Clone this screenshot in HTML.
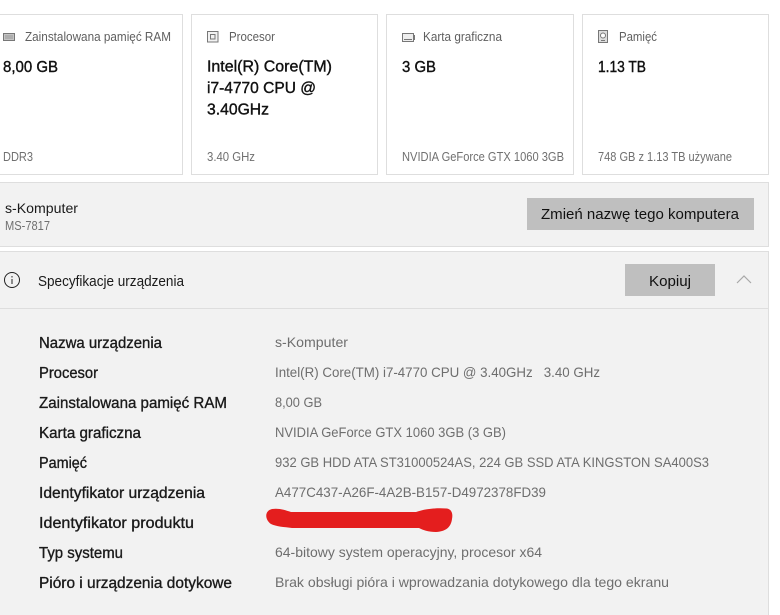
<!DOCTYPE html>
<html lang="pl"><head><meta charset="utf-8"><title>Specyfikacje urządzenia</title>
<style>
html,body{margin:0;padding:0;background:#fff;width:780px;height:615px;overflow:hidden}
svg{display:block;font-family:"Liberation Sans",sans-serif}
.l{font-size:12.5px;fill:#5f5f5f}
.v{font-size:16px;fill:#111;stroke:#111;stroke-width:.4px}
.s{font-size:12.5px;fill:#707070}
.k{font-size:15.5px;fill:#1a1a1a;stroke:#1a1a1a;stroke-width:.35px}
.d{font-size:14px;fill:#6e6e6e}
.t{font-size:14.5px;fill:#1a1a1a}
.i{fill:none;stroke:#777;stroke-width:1}
</style></head><body>
<svg width="780" height="615" viewBox="0 0 780 615" xmlns="http://www.w3.org/2000/svg">
<rect width="780" height="615" fill="#fff"/>
<!-- cards -->
<g fill="#fff" stroke="#dedede">
<rect x="-3" y="14.500" width="185.500" height="160"/>
<rect x="191.500" y="14.500" width="186" height="160"/>
<rect x="386.500" y="14.500" width="187" height="160"/>
<rect x="582.500" y="14.500" width="186" height="160"/>
</g>
<!-- card icons -->
<g class="i">
<rect x="3.500" y="33.500" width="11" height="7" fill="#c4c4c4"/>
<path d="M5 36h8M5 38h8" stroke="#999"/>
<rect x="207.500" y="31.500" width="10.500" height="10.500" fill="#f2f2f2"/>
<rect x="210.500" y="34.500" width="4.500" height="4.500"/>
<rect x="402.500" y="33.500" width="11" height="8" fill="#eee"/>
<path d="M404 39.500h8M414.500 35v5"/>
<rect x="598.500" y="30.500" width="9" height="12" fill="#ddd"/>
<circle cx="603" cy="35.500" r="2.500" fill="#fff"/>
<path d="M601 40.500h4"/>
</g>
<!-- card text -->
<text class="l" x="25" y="41" textLength="146" lengthAdjust="spacingAndGlyphs">Zainstalowana pamięć RAM</text>
<text class="l" x="229" y="41" textLength="46" lengthAdjust="spacingAndGlyphs">Procesor</text>
<text class="l" x="423" y="41" textLength="79" lengthAdjust="spacingAndGlyphs">Karta graficzna</text>
<text class="l" x="619" y="41" textLength="38" lengthAdjust="spacingAndGlyphs">Pamięć</text>
<text class="v" x="3" y="72" textLength="55" lengthAdjust="spacingAndGlyphs">8,00 GB</text>
<text class="v" x="207" y="71.500" textLength="125" lengthAdjust="spacingAndGlyphs">Intel(R) Core(TM)</text>
<text class="v" x="207" y="93" textLength="109" lengthAdjust="spacingAndGlyphs">i7-4770 CPU @</text>
<text class="v" x="207" y="114.500" textLength="62" lengthAdjust="spacingAndGlyphs">3.40GHz</text>
<text class="v" x="402" y="72" textLength="34" lengthAdjust="spacingAndGlyphs">3 GB</text>
<text class="v" x="598" y="72" textLength="48" lengthAdjust="spacingAndGlyphs">1.13 TB</text>
<text class="s" x="3" y="161" textLength="30" lengthAdjust="spacingAndGlyphs">DDR3</text>
<text class="s" x="207" y="161" textLength="48" lengthAdjust="spacingAndGlyphs">3.40 GHz</text>
<text class="s" x="402" y="161" textLength="162" lengthAdjust="spacingAndGlyphs">NVIDIA GeForce GTX 1060 3GB</text>
<text class="s" x="598" y="161" textLength="134" lengthAdjust="spacingAndGlyphs">748 GB z 1.13 TB używane</text>
<!-- computer panel -->
<rect x="-2" y="182.500" width="770.500" height="64" fill="#f2f2f2" stroke="#dedede"/>
<text x="5" y="213" font-size="14" fill="#1a1a1a" textLength="73" lengthAdjust="spacingAndGlyphs">s-Komputer</text>
<text class="s" x="5" y="230" textLength="45" lengthAdjust="spacingAndGlyphs">MS-7817</text>
<rect x="527" y="198" width="227" height="32" fill="#bfbfbf"/>
<text x="541" y="219" font-size="15" fill="#111" textLength="198" lengthAdjust="spacingAndGlyphs">Zmień nazwę tego komputera</text>
<!-- spec panel -->
<rect x="-2" y="251.500" width="770.500" height="370" fill="#f2f2f2" stroke="#dedede"/>
<path d="M0 308.500H768" stroke="#dedede"/>
<circle cx="12" cy="280" r="7.500" fill="none" stroke="#222"/>
<path d="M12 279v5M12 276v1.500" stroke="#222" fill="none"/>
<text class="t" x="38" y="286" textLength="146" lengthAdjust="spacingAndGlyphs">Specyfikacje urządzenia</text>
<rect x="625" y="264" width="90" height="32" fill="#bfbfbf"/>
<text x="649" y="286" font-size="15" fill="#111" textLength="42" lengthAdjust="spacingAndGlyphs">Kopiuj</text>
<path d="M737 283l7-7 7 7" fill="none" stroke="#a8a8a8" stroke-width="1.200"/>
<!-- rows -->
<text class="k" x="39" y="348" textLength="123" lengthAdjust="spacingAndGlyphs">Nazwa urządzenia</text>
<text class="k" x="39" y="378" textLength="59" lengthAdjust="spacingAndGlyphs">Procesor</text>
<text class="k" x="39" y="408" textLength="188" lengthAdjust="spacingAndGlyphs">Zainstalowana pamięć RAM</text>
<text class="k" x="39" y="438" textLength="102" lengthAdjust="spacingAndGlyphs">Karta graficzna</text>
<text class="k" x="39" y="468" textLength="48" lengthAdjust="spacingAndGlyphs">Pamięć</text>
<text class="k" x="39" y="498" textLength="166" lengthAdjust="spacingAndGlyphs">Identyfikator urządzenia</text>
<text class="k" x="39" y="528" textLength="155" lengthAdjust="spacingAndGlyphs">Identyfikator produktu</text>
<text class="k" x="39" y="558" textLength="84" lengthAdjust="spacingAndGlyphs">Typ systemu</text>
<text class="k" x="39" y="588" textLength="193" lengthAdjust="spacingAndGlyphs">Pióro i urządzenia dotykowe</text>
<text class="d" x="275" y="347" textLength="73" lengthAdjust="spacingAndGlyphs">s-Komputer</text>
<text class="d" x="275" y="377" textLength="325" lengthAdjust="spacingAndGlyphs" xml:space="preserve">Intel(R) Core(TM) i7-4770 CPU @ 3.40GHz   3.40 GHz</text>
<text class="d" x="275" y="407" textLength="47" lengthAdjust="spacingAndGlyphs">8,00 GB</text>
<text class="d" x="275" y="437" textLength="231" lengthAdjust="spacingAndGlyphs">NVIDIA GeForce GTX 1060 3GB (3 GB)</text>
<text class="d" x="275" y="467" textLength="434" lengthAdjust="spacingAndGlyphs">932 GB HDD ATA ST31000524AS, 224 GB SSD ATA KINGSTON SA400S3</text>
<text class="d" x="275" y="497" textLength="271" lengthAdjust="spacingAndGlyphs">A477C437-A26F-4A2B-B157-D4972378FD39</text>
<text class="d" x="275" y="557" textLength="267" lengthAdjust="spacingAndGlyphs">64-bitowy system operacyjny, procesor x64</text>
<text class="d" x="275" y="587" textLength="394" lengthAdjust="spacingAndGlyphs">Brak obsługi pióra i wprowadzania dotykowego dla tego ekranu</text>
<!-- red redaction -->
<path d="M272 509C279 508 285 510 291 512L416 512C424 509 436 507.500 447 508.500C452 509.500 453 514 452 519C451 527 446 531.500 436 532C428 532 423 530 419 528L292 528C284 527 276 526.500 271 524C265 520 264 511 272 509Z" fill="#e41e1e"/>
</svg>
</body></html>
